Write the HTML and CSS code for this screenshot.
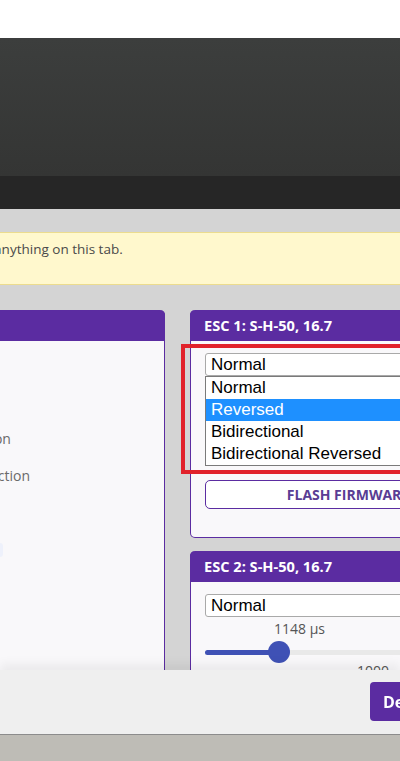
FILE: index.html
```html
<!DOCTYPE html>
<html>
<head>
  <title>ESC Configurator</title>
  <link rel="stylesheet" href="styles.css">
</head>
<body>
  <div class="topbar"></div>
  <header class="header"></header>
  <nav class="tabs"></nav>

  <main class="content">
    <div class="note">Be careful when changing anything on this tab.</div>

    <div class="columns">
      <section class="panel common">
        <div class="panel-head">Common</div>
        <div class="panel-body">
          <div class="row"><span class="label">Startup</span></div>
          <div class="row"><span class="label">Timing</span></div>
          <div class="row"><span class="label">Temperature Protection</span></div>
          <div class="row"><span class="label">Low RPM Power Protection</span></div>
          <div class="row"><span class="label">Beeper</span></div>
          <div class="row"><span class="label">Beacon</span><span class="toggle"></span></div>
        </div>
      </section>

      <div class="esc-list">
        <section class="panel esc">
          <div class="panel-head">ESC 1: S-H-50, 16.7</div>
          <div class="panel-body">
            <div class="select-wrap">
              <div class="select">Normal</div>
              <ul class="dropdown">
                <li>Normal</li>
                <li class="active">Reversed</li>
                <li>Bidirectional</li>
                <li>Bidirectional Reversed</li>
              </ul>
            </div>
            <div class="slider-value">1148 µs</div>
            <div class="slider"><div class="fill"></div><div class="thumb"></div></div>
            <div class="slider-scale">1000</div>
            <button class="flash">FLASH FIRMWARE</button>
          </div>
          <div class="highlight"></div>
        </section>

        <section class="panel esc">
          <div class="panel-head">ESC 2: S-H-50, 16.7</div>
          <div class="panel-body">
            <div class="select-wrap">
              <div class="select">Normal</div>
            </div>
            <div class="slider-value">1148 µs</div>
            <div class="slider"><div class="fill"></div><div class="thumb"></div></div>
            <div class="slider-scale">1000</div>
            <button class="flash">FLASH FIRMWARE</button>
          </div>
        </section>
      </div>
    </div>
  </main>

  <footer class="footer">
    <div class="actions">
      <button class="action">Default Settings</button>
    </div>
    <div class="statusbar"></div>
  </footer>
</body>
</html>
```

FILE: styles.css
```css
body {
  margin: 0;
  font-family: 'Open Sans', sans-serif;
  background-color: #d4d4d4;
  overflow: hidden;
}
.topbar {
  height: 38px;
  background-color: #fff;
}
.header {
  height: 138px;
  background: linear-gradient(#3c3e3d, #343534);
}
.tabs {
  height: 33px;
  background-color: #262626;
}
.content {
  margin-left: -200px;
  width: 720px;
  padding-top: 23px;
}
.note {
  height: 53px;
  box-sizing: border-box;
  padding: 6px 0 0 29px;
  background-color: #fff8cd;
  border-top: 1px solid #ecdc8e;
  border-bottom: 1px solid #ecdc8e;
  color: #4a4a4a;
  font-size: 13.5px;
  line-height: 20px;
}
.columns {
  display: grid;
  grid-template-columns: 365px 316px;
  gap: 25px;
  margin-top: 25px;
}
.panel {
  position: relative;
  background-color: #f9f8fa;
  border: 1px solid #5b2ca1;
  border-top: none;
  border-radius: 5px;
}
.panel-head {
  height: 31px;
  padding-left: 14px;
  background-color: #5b2ca1;
  border-radius: 5px 5px 0 0;
  color: #fff;
  font-weight: bold;
  font-size: 14.6px;
  line-height: 31px;
  margin: 0 -1px;
}
.common {
  height: 420px;
}
.common .panel-body {
  padding-top: 5px;
}
.row {
  display: flex;
  align-items: center;
  height: 37px;
  padding-left: 53px;
}
.label {
  color: #6a6a6a;
  font-size: 14px;
}
.toggle {
  width: 10px;
  height: 14px;
  margin-left: 91px;
  background-color: #eef1fb;
  border-radius: 3px;
}
.esc-list {
  display: flex;
  flex-direction: column;
  gap: 13px;
}
.esc .panel-body {
  padding: 12px 14px 28px;
}
.select-wrap {
  position: relative;
}
.select {
  height: 23px;
  box-sizing: border-box;
  padding-left: 5px;
  background-color: #fff;
  border: 1px solid #a9a9a9;
  border-radius: 3px;
  font-family: 'Liberation Sans', Arial, sans-serif;
  font-size: 17px;
  line-height: 21px;
  color: #000;
}
.dropdown {
  position: absolute;
  top: 23px;
  left: 0;
  right: 0;
  margin: 0;
  padding: 0;
  list-style: none;
  background-color: #fff;
  border: 1px solid #7a7a7a;
  font-family: 'Liberation Sans', Arial, sans-serif;
  font-size: 17px;
  color: #000;
  z-index: 2;
}
.dropdown li {
  height: 22px;
  line-height: 21px;
  padding-left: 5px;
}
.dropdown li.active {
  background-color: #1e90ff;
  color: #fff;
}
.slider-value {
  margin-top: 2px;
  padding-left: 69px;
  color: #555;
  font-size: 14px;
  line-height: 20px;
}
.slider {
  position: relative;
  height: 5px;
  margin: 11px 0 0;
  background-color: #e9e9e9;
  border-radius: 3px;
}
.fill {
  width: 75px;
  height: 5px;
  background-color: #3f51b5;
  border-radius: 3px;
}
.thumb {
  position: absolute;
  left: 63px;
  top: -9px;
  width: 22px;
  height: 22px;
  border-radius: 50%;
  background-color: #3f51b5;
}
.slider-scale {
  margin-top: 6px;
  padding-left: 152px;
  color: #555;
  font-size: 14px;
  line-height: 20px;
}
.flash {
  display: block;
  width: 100%;
  height: 29px;
  margin-top: 40px;
  background-color: #fff;
  border: 1px solid #5b2ca1;
  border-radius: 5px;
  color: #5a3d94;
  font-family: 'Open Sans', sans-serif;
  font-weight: bold;
  font-size: 14px;
}
.highlight {
  position: absolute;
  left: -10px;
  top: 34px;
  width: 320px;
  height: 130px;
  box-sizing: border-box;
  border: 4px solid #e1222b;
  z-index: 3;
}
.footer {
  position: fixed;
  left: 0;
  right: 0;
  bottom: 0;
}
.actions {
  height: 64px;
  box-sizing: border-box;
  padding: 12px 0 0 370px;
  background-color: #efefef;
  box-shadow: 0 -6px 10px rgba(0, 0, 0, 0.06);
  white-space: nowrap;
}
.action {
  height: 39px;
  padding: 0 13px;
  background-color: #5b2ca1;
  border: none;
  border-radius: 4px;
  color: #fff;
  font-family: 'Open Sans', sans-serif;
  font-weight: bold;
  font-size: 16px;
}
.statusbar {
  height: 26px;
  background-color: #bebcb6;
  border-top: 1px solid #8c8c8c;
}
```
